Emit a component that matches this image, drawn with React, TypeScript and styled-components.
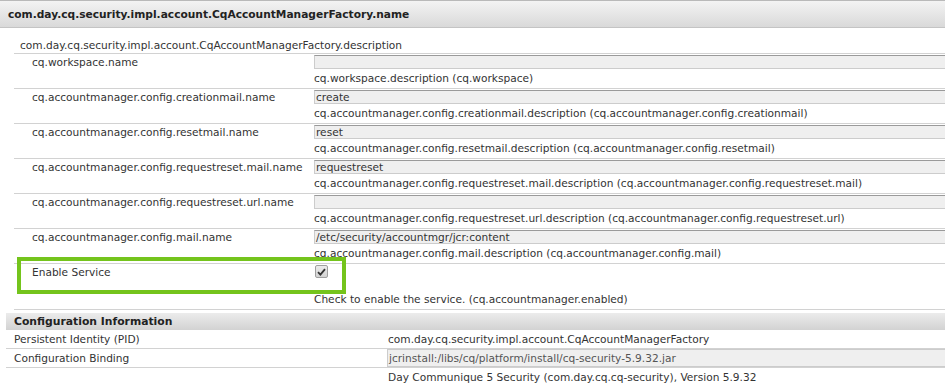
import styled, { createGlobalStyle } from "styled-components";

const GlobalStyle = createGlobalStyle`
  html, body {
    margin: 0;
    padding: 0;
    background: #ffffff;
  }
  body {
    font-family: "DejaVu Sans", Verdana, sans-serif;
    font-size: 10.6px;
    color: #333333;
    overflow: hidden;
  }
`;

const Page = styled.div`
  position: relative;
  width: 945px;
  height: 386px;
  overflow: hidden;
`;

const Section = styled.div`
  display: flex;
  flex-direction: column;
`;

const Header = styled.div`
  height: 26px;
  display: flex;
  align-items: center;
  padding-left: 8px;
  border-top: 1px solid #b9b9b9;
  border-bottom: 1px solid #c4c4c4;
  background: linear-gradient(#f3f3f3, #d9d9d9);
  font-weight: bold;
  font-size: 10.65px;
  color: #222222;
  white-space: nowrap;
`;

const Description = styled.div`
  margin-left: 14px;
  padding: 10px 0 0 6px;
  height: 15px;
  line-height: 14px;
  border-bottom: 1px solid #d2d2d2;
  white-space: nowrap;
`;

const PropRow = styled.div`
  margin-left: 14px;
  display: grid;
  grid-template-columns: 300px 1fr;
  border-bottom: 1px solid #d2d2d2;
  padding-top: 1px;
`;

const Label = styled.div`
  padding-left: 18px;
  line-height: 14px;
  white-space: nowrap;
`;

const Value = styled.div`
  display: flex;
  flex-direction: column;
  min-width: 0;
`;

const TextBox = styled.div`
  height: 12px;
  margin-right: -20px;
  padding-left: 1px;
  line-height: 12px;
  background: #efefef;
  border: 1px solid #cccccc;
  border-top-color: #9a9a9a;
  white-space: nowrap;
`;

const Help = styled.div`
  height: 19px;
  line-height: 19px;
  white-space: nowrap;
`;

const CheckCell = styled.div`
  height: 25px;
  padding-left: 1px;
`;

const CheckBox = styled.span`
  display: inline-flex;
  align-items: center;
  justify-content: center;
  width: 11px;
  height: 11px;
  border: 1px solid #9f9f9f;
  border-radius: 2px;
  background: linear-gradient(#ececec, #d2d2d2);
`;

const Highlight = styled.div`
  position: absolute;
  left: 17px;
  top: 257px;
  width: 321px;
  height: 29px;
  border: 4px solid #74c41c;
`;

const InfoSection = styled.div`
  margin: 3px 0 0 6px;
  display: flex;
  flex-direction: column;
`;

const InfoHeader = styled.div`
  height: 17px;
  display: flex;
  align-items: center;
  padding-left: 8px;
  background: linear-gradient(#ececec, #d2d2d2);
  font-weight: bold;
  font-size: 10.8px;
  color: #222222;
`;

const InfoRow = styled.div`
  display: grid;
  grid-template-columns: 381px 1fr;
  align-items: center;
  height: 18px;
  border-bottom: 1px solid #d2d2d2;
`;

const InfoLabel = styled.div`
  padding-left: 8px;
  white-space: nowrap;
`;

const InfoValue = styled.div<{ $boxed?: boolean }>`
  white-space: nowrap;
  padding-left: 1px;
  ${(p) =>
    p.$boxed &&
    `
    height: 16px;
    line-height: 16px;
    margin-right: -20px;
    background: #efefef;
    border: 1px solid #cccccc;
    color: #555555;
  `}
`;

interface IProp {
  id: string;
  label: string;
  value: string;
  help: string;
}

const props: IProp[] = [
  {
    id: "cq.workspace",
    label: "cq.workspace.name",
    value: "",
    help: "cq.workspace.description (cq.workspace)",
  },
  {
    id: "cq.accountmanager.config.creationmail",
    label: "cq.accountmanager.config.creationmail.name",
    value: "create",
    help: "cq.accountmanager.config.creationmail.description (cq.accountmanager.config.creationmail)",
  },
  {
    id: "cq.accountmanager.config.resetmail",
    label: "cq.accountmanager.config.resetmail.name",
    value: "reset",
    help: "cq.accountmanager.config.resetmail.description (cq.accountmanager.config.resetmail)",
  },
  {
    id: "cq.accountmanager.config.requestreset.mail",
    label: "cq.accountmanager.config.requestreset.mail.name",
    value: "requestreset",
    help: "cq.accountmanager.config.requestreset.mail.description (cq.accountmanager.config.requestreset.mail)",
  },
  {
    id: "cq.accountmanager.config.requestreset.url",
    label: "cq.accountmanager.config.requestreset.url.name",
    value: "",
    help: "cq.accountmanager.config.requestreset.url.description (cq.accountmanager.config.requestreset.url)",
  },
  {
    id: "cq.accountmanager.config.mail",
    label: "cq.accountmanager.config.mail.name",
    value: "/etc/security/accountmgr/jcr:content",
    help: "cq.accountmanager.config.mail.description (cq.accountmanager.config.mail)",
  },
];

function App() {
  return (
    <Page>
      <GlobalStyle />
      <Section>
        <Header>com.day.cq.security.impl.account.CqAccountManagerFactory.name</Header>
        <Description>
          com.day.cq.security.impl.account.CqAccountManagerFactory.description
        </Description>
        {props.map((prop) => (
          <PropRow key={prop.id}>
            <Label>{prop.label}</Label>
            <Value>
              <TextBox>{prop.value}</TextBox>
              <Help>{prop.help}</Help>
            </Value>
          </PropRow>
        ))}
        <PropRow>
          <Label>Enable Service</Label>
          <Value>
            <CheckCell>
              <CheckBox>
                <svg width="9" height="8" viewBox="0 0 9 8">
                  <path
                    d="M1 4.2 L3.4 6.6 L8 1.2"
                    fill="none"
                    stroke="#333"
                    strokeWidth="1.8"
                  />
                </svg>
              </CheckBox>
            </CheckCell>
            <Help>Check to enable the service. (cq.accountmanager.enabled)</Help>
          </Value>
        </PropRow>
      </Section>
      <InfoSection>
        <InfoHeader>Configuration Information</InfoHeader>
        <InfoRow>
          <InfoLabel>Persistent Identity (PID)</InfoLabel>
          <InfoValue>com.day.cq.security.impl.account.CqAccountManagerFactory</InfoValue>
        </InfoRow>
        <InfoRow>
          <InfoLabel>Configuration Binding</InfoLabel>
          <InfoValue $boxed>jcrinstall:/libs/cq/platform/install/cq-security-5.9.32.jar</InfoValue>
        </InfoRow>
        <InfoRow>
          <InfoLabel />
          <InfoValue>Day Communique 5 Security (com.day.cq.cq-security), Version 5.9.32</InfoValue>
        </InfoRow>
      </InfoSection>
      <Highlight />
    </Page>
  );
}

export default App;
